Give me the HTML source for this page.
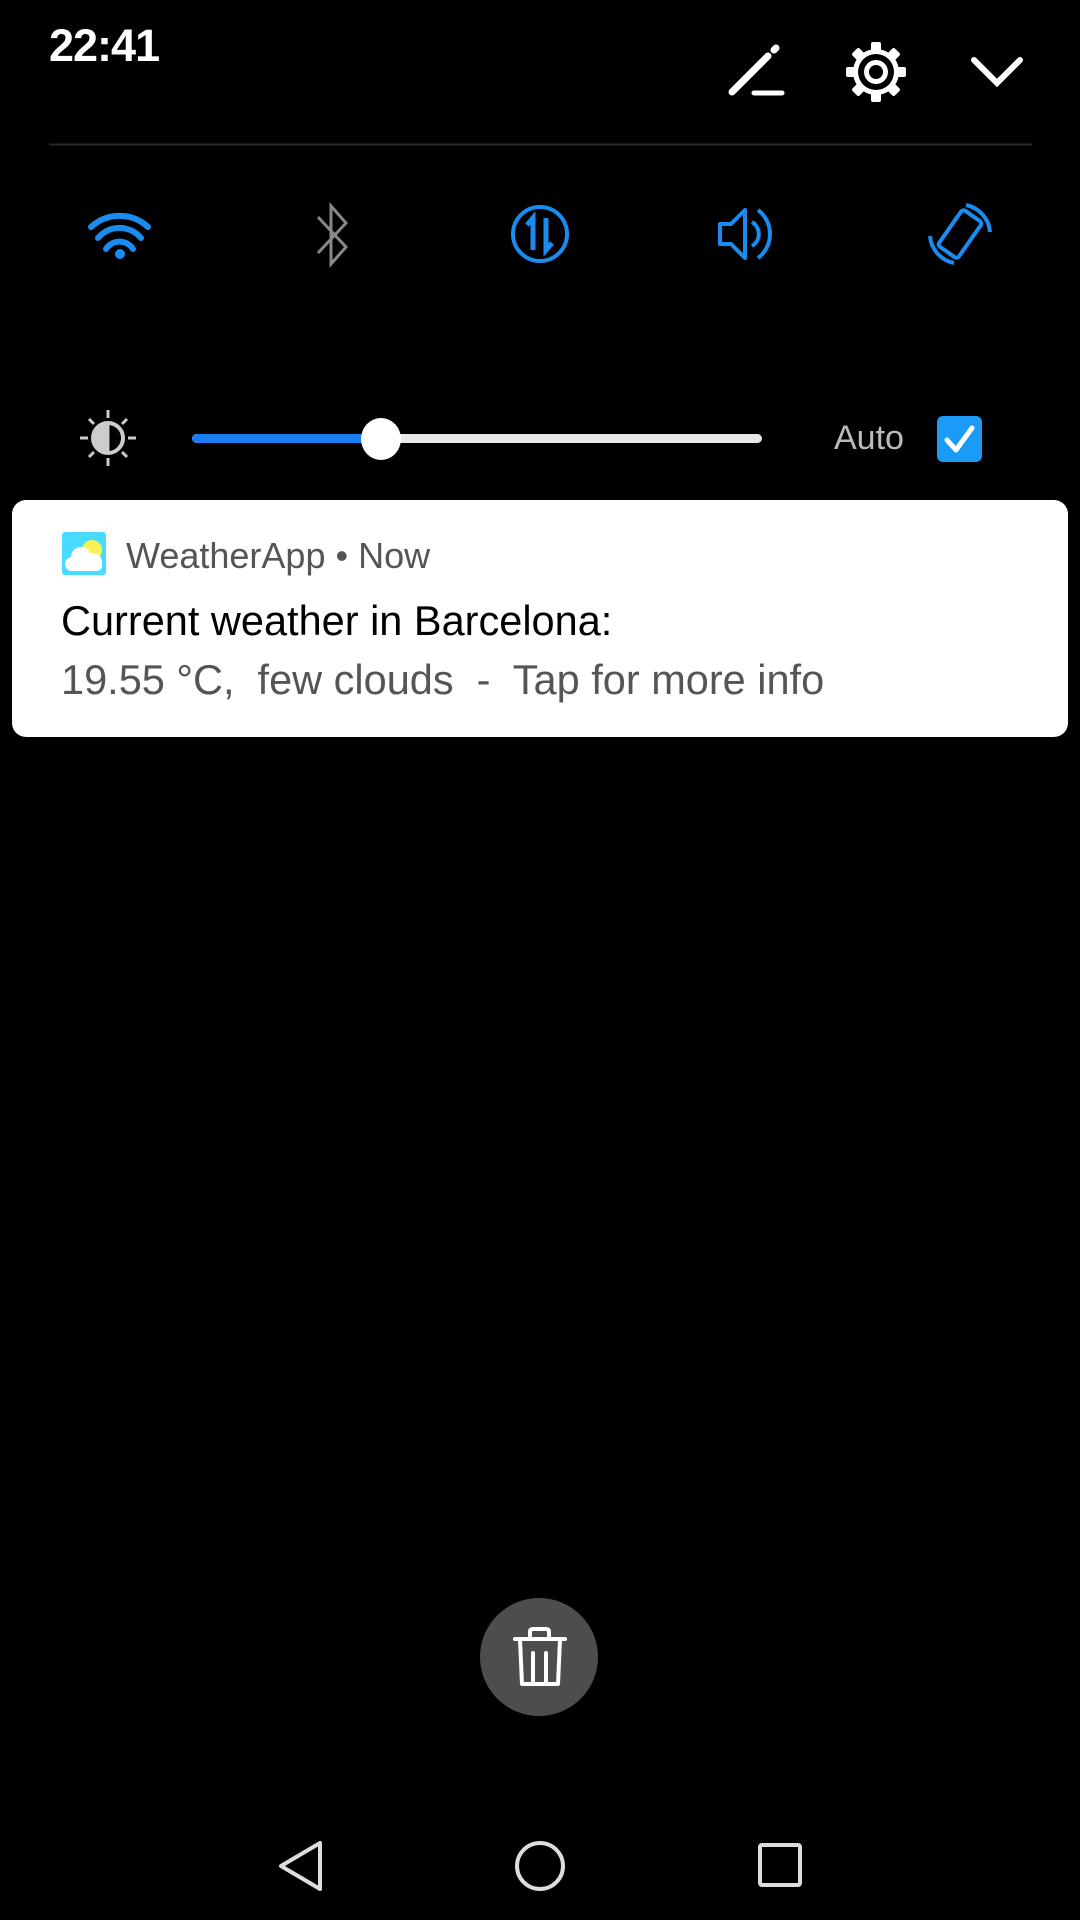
<!DOCTYPE html>
<html><head><meta charset="utf-8"><style>
html,body{margin:0;padding:0;background:#000;width:1080px;height:1920px;overflow:hidden;font-family:"Liberation Sans",sans-serif;}
.a{position:absolute;}
</style></head><body>
<div class="a" style="left:49px;top:20px;color:#fff;font-size:45px;font-weight:bold;letter-spacing:-1px;">22:41</div>
<svg class="a" style="left:0;top:0" width="1080" height="1920">
 <g stroke="#fff" stroke-width="7" stroke-linecap="round" fill="none">
  <line x1="732" y1="92" x2="768" y2="56"/><line x1="774" y1="50" x2="776" y2="48"/>
  <line x1="754" y1="93" x2="782" y2="93" stroke-width="5"/>
  <polyline points="974,60 997,83 1020,60" stroke-width="6"/>
 </g>
 <g transform="translate(876,72)" fill="#fff">
  <circle r="23"/>
  <g id="t"><rect x="-5" y="-30" width="10" height="12" rx="2"/></g>
  <use href="#t" transform="rotate(45)"/><use href="#t" transform="rotate(90)"/><use href="#t" transform="rotate(135)"/>
  <use href="#t" transform="rotate(180)"/><use href="#t" transform="rotate(225)"/><use href="#t" transform="rotate(270)"/><use href="#t" transform="rotate(315)"/>
  <circle r="18" fill="#000"/><circle r="12"/><circle r="7" fill="#000"/>
 </g>
 <line x1="49" y1="144.5" x2="1032" y2="144.5" stroke="#2a2a2a" stroke-width="2"/>
 <g stroke="#1a8cf0" stroke-width="6" fill="none" stroke-linecap="round">
  <path d="M91 227 a42 42 0 0 1 57 0"/><path d="M98 238 a28 28 0 0 1 43 0"/><path d="M106 249 a16 16 0 0 1 27 0"/>
 </g>
 <circle cx="120" cy="254" r="5" fill="#1a8cf0"/>
 <path d="M318 217 L346 247 L331 264 L331 206 L346 223 L318 253" stroke="#888" stroke-width="3" fill="none"/>
 <circle cx="540" cy="234" r="27" stroke="#1a8cf0" stroke-width="4" fill="none"/>
 <path d="M533 250 V218 L527 225 M546 218 V250 L552 243" stroke="#1a8cf0" stroke-width="5" fill="none"/>
 <path d="M720 224 H731 L745 210 V258 L731 244 H720 Z" stroke="#1a8cf0" stroke-width="4" fill="none" stroke-linejoin="round"/>
 <path d="M752 222 a14 14 0 0 1 0 24" stroke="#1a8cf0" stroke-width="4" fill="none"/>
 <path d="M758 210 a30 30 0 0 1 0 48" stroke="#1a8cf0" stroke-width="4" fill="none"/>
 <g transform="translate(960,234) rotate(35)">
  <rect x="-12" y="-22" width="24" height="44" rx="3" stroke="#1a8cf0" stroke-width="4" fill="none"/>
 </g>
 <path d="M966 205 A30 30 0 0 1 990 232" stroke="#1a8cf0" stroke-width="4" fill="none"/>
 <path d="M954 263 A30 30 0 0 1 930 236" stroke="#1a8cf0" stroke-width="4" fill="none"/>
 <g transform="translate(108,438)" stroke="#ccc" stroke-width="3" fill="none">
  <circle r="15" stroke-width="4"/>
  <path d="M0 -15 A15 15 0 0 0 0 15 Z" fill="#ccc"/>
  <line y1="-20" y2="-28"/><line y1="20" y2="28"/><line x1="-20" x2="-28"/><line x1="20" x2="28"/>
  <line x1="14" y1="14" x2="19" y2="19"/><line x1="-14" y1="14" x2="-19" y2="19"/><line x1="14" y1="-14" x2="19" y2="-19"/><line x1="-14" y1="-14" x2="-19" y2="-19"/>
 </g>
 <rect x="192" y="434" width="570" height="9" rx="4.5" fill="#e8e8e8"/>
 <rect x="192" y="434" width="190" height="9" rx="4.5" fill="#1a7ef0"/>
 <ellipse cx="381" cy="439" rx="20" ry="21" fill="#fff"/>
 <rect x="937" y="416" width="45" height="46" rx="6" fill="#1a9bf5"/>
 <polyline points="947,440 956,450 972,428" stroke="#fff" stroke-width="5" fill="none" stroke-linecap="round" stroke-linejoin="round"/>
 <rect x="12" y="500" width="1056" height="237" rx="14" fill="#fff"/>
 <rect x="62" y="532" width="44" height="43" rx="3" fill="#47dcff"/>
 <circle cx="92" cy="550" r="10" fill="#fbf25a"/>
 <g fill="#fff"><circle cx="81" cy="557" r="10"/><circle cx="93" cy="562" r="9"/><circle cx="72" cy="564" r="7"/><rect x="66" y="560" width="36" height="11" rx="5"/></g>
 <circle cx="539" cy="1657" r="59" fill="#4d4d4d"/>
 <g stroke="#fff" stroke-width="4" fill="none" stroke-linecap="round" stroke-linejoin="round">
  <line x1="515" y1="1639" x2="565" y2="1639"/>
  <path d="M530 1638 V1632 Q530 1629 533 1629 H546 Q549 1629 549 1632 V1638"/>
  <path d="M520 1640 L522 1684 H558 L560 1640"/>
  <line x1="533" y1="1653" x2="533" y2="1683"/><line x1="546" y1="1653" x2="546" y2="1683"/>
 </g>
 <path d="M320 1843 V1889 L281 1866 Z" stroke="#ddd" stroke-width="4" fill="none" stroke-linejoin="round"/>
 <circle cx="540" cy="1866" r="23" stroke="#ddd" stroke-width="4" fill="none"/>
 <rect x="760" y="1845" width="40" height="40" rx="2" stroke="#ddd" stroke-width="4" fill="none"/>
</svg>
<div class="a" style="left:834px;top:419px;color:#bbb;font-size:34px;">Auto</div>
<div class="a" style="left:126px;top:535px;color:#555;font-size:36px;">WeatherApp • Now</div>
<div class="a" style="left:61px;top:597px;color:#000;font-size:41.5px;">Current weather in Barcelona:</div>
<div class="a" style="left:61px;top:656px;color:#555;font-size:41.5px;white-space:pre;">19.55 °C,  few clouds  -  Tap for more info</div>
</body></html>
